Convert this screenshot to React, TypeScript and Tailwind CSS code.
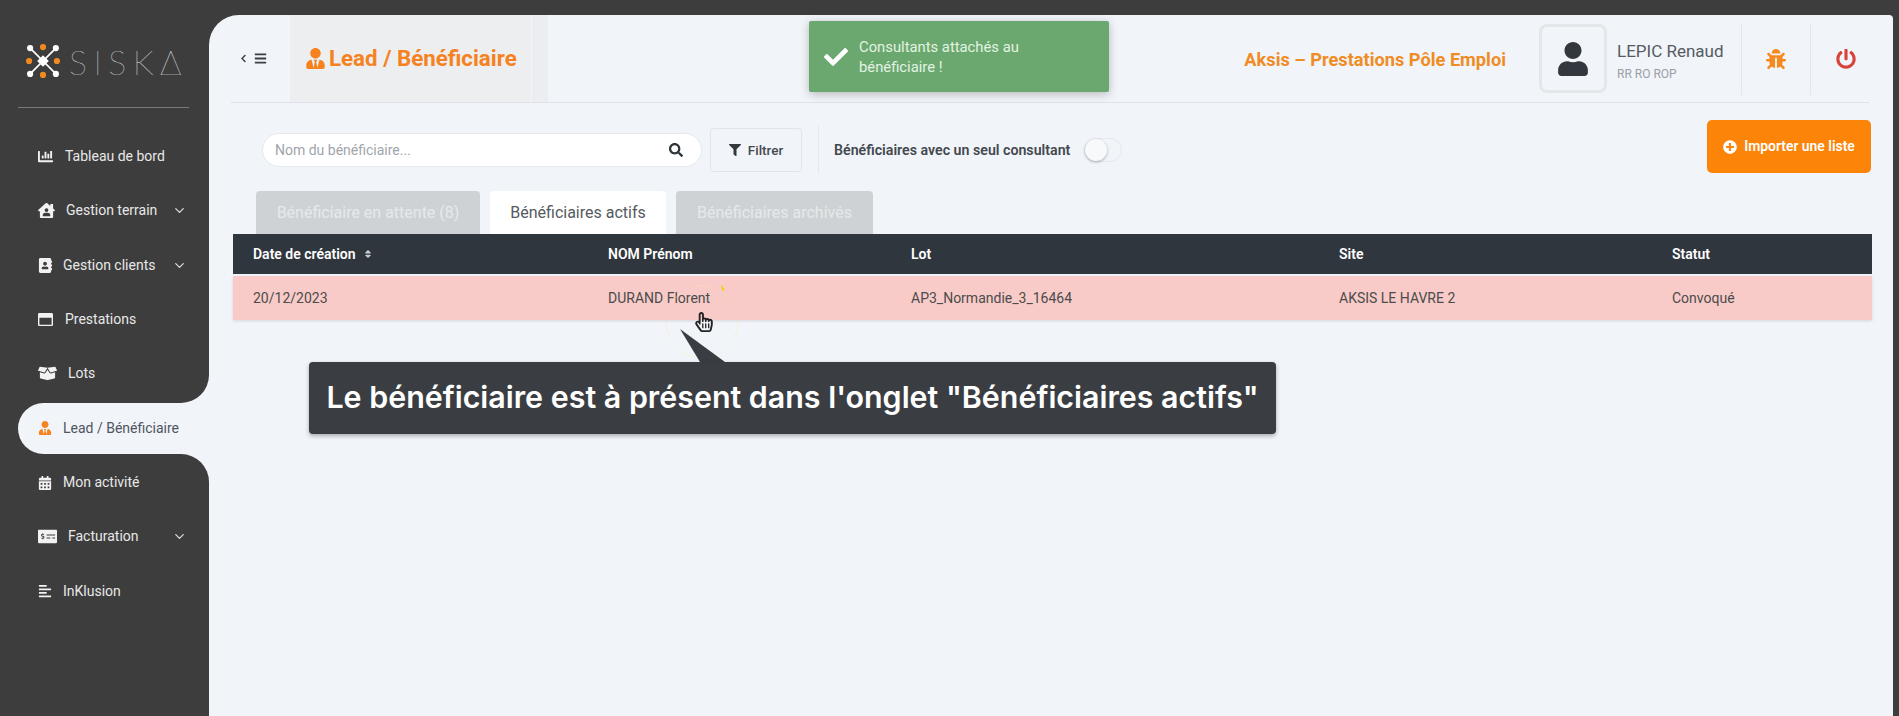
import React from "react";
import { ChevronDown } from "lucide-react";
import {
  FaAddressBook, FaAlignLeft, FaBars, FaBoxOpen, FaBug, FaCalendarAlt, FaChartBar, FaCheck, FaChevronLeft,
  FaFilter, FaHouseUser, FaMoneyCheckAlt, FaPlusCircle, FaPowerOff, FaRegHandPointer, FaRegWindowMaximize, FaSearch,
  FaSort, FaUser, FaUserTie,
} from "react-icons/fa";

const items = [
  { label: "Tableau de bord", icon: <FaChartBar size={15} />, w: "w-[27px]" },
  { label: "Gestion terrain", icon: <FaHouseUser size={17} />, w: "w-[28px]", chev: true },
  { label: "Gestion clients", icon: <FaAddressBook size={15} />, w: "w-[25px]", chev: true },
  { label: "Prestations", icon: <FaRegWindowMaximize size={15} />, w: "w-[27px]" },
  { label: "Lots", icon: <FaBoxOpen size={19} />, w: "w-[30px]", shape: "br" },
  { label: "Lead / Bénéficiaire", icon: <FaUserTie size={14} />, w: "w-[25px]", active: true },
  { label: "Mon activité", icon: <FaCalendarAlt size={14} />, w: "w-[25px]", shape: "tr" },
  { label: "Facturation", icon: <FaMoneyCheckAlt size={19} />, w: "w-[30px]", chev: true },
  { label: "InKlusion", icon: <FaAlignLeft size={14} />, w: "w-[25px]" },
];

function SideItem({ it }: { it: (typeof items)[number] }) {
  if (it.active) {
    return (
      <div className="h-[51px] ml-[18px] w-[191px] bg-[#f1f4f9] rounded-l-full flex items-center pl-[20px] text-[#4f5560] text-[14px]">
        <span className={`${it.w} text-[#f5831f]`}>{it.icon}</span>
        {it.label}
      </div>
    );
  }
  const shape =
    it.shape === "br" ? "rounded-br-[28px] h-[56px] pb-[2px]" : it.shape === "tr" ? "rounded-tr-[28px] h-[56px] pt-[2px]" : "h-[54.3px]";
  const back = it.shape ? "bg-[linear-gradient(to_right,#3d3d3d_50%,#f1f4f9_50%)]" : "";
  return (
    <div className={back}>
      <div className={`bg-[#3d3d3d] ${shape} flex items-center pl-[38px] pr-[22px] text-[#e8e8e8] text-[14px]`}>
        <span className={`${it.w} text-[#f2f2f2]`}>{it.icon}</span>
        <span className="flex-1">{it.label}</span>
        {it.chev && <ChevronDown size={15} className="text-[#dddddd]" />}
      </div>
    </div>
  );
}

function Logo() {
  const nodes = [[4, 4], [29, 4], [4, 29], [29, 29]];
  const dots = [[16.5, 3], [3, 16.5], [30, 16.5], [16.5, 30]];
  return (
    <svg width="34" height="34" viewBox="0 0 33 33">
      <path d="M4 4L29 29M29 4L4 29" stroke="#ffffff" strokeWidth="1.6" />
      <rect x="12.5" y="12.5" width="8" height="8" fill="#ffffff" transform="rotate(45 16.5 16.5)" />
      {nodes.map(([x, y], i) => <circle key={i} cx={x} cy={y} r="3" fill="#ffffff" />)}
      {dots.map(([x, y], i) => <circle key={i} cx={x} cy={y} r="3" fill="#f28a20" />)}
    </svg>
  );
}

const cols = [
  { w: "w-[355px]", head: "Date de création", val: "20/12/2023", sort: true },
  { w: "w-[303px]", head: "NOM Prénom", val: "DURAND Florent" },
  { w: "w-[428px]", head: "Lot", val: "AP3_Normandie_3_16464" },
  { w: "w-[333px]", head: "Site", val: "AKSIS LE HAVRE 2" },
  { w: "flex-1", head: "Statut", val: "Convoqué" },
];

export default function App() {
  return (
    <div className="relative w-[1899px] h-[716px] bg-[#3d3d3d] flex overflow-hidden font-['Roboto',sans-serif]">
      <aside className="w-[209px] shrink-0 flex flex-col">
        <div className="h-[108px] mx-[18px] w-[171px] border-b border-[#777a7c] flex items-start pl-[8px] pt-[44px] gap-[9px]">
          <Logo />
          <span className="font-['Lato',sans-serif] font-thin text-[34px] leading-[36px] tracking-[6.5px] text-[#f4f4f4] whitespace-nowrap">SISKΔ</span>
        </div>
        <nav className="mt-[21.5px] flex flex-col">
          {items.map((it) => <SideItem key={it.label} it={it} />)}
        </nav>
      </aside>

      <main className="w-[1684px] mt-[15px] bg-[#f1f4f9] rounded-tl-[30px] rounded-tr-[4px] flex flex-col">
        <header className="h-[88px] ml-[22px] mr-[24px] border-b border-[#dfe3e7] flex items-center shrink-0">
          <div className="w-[60px] flex items-center gap-[6px] pl-[8px] text-[#3a3f45]">
            <FaChevronLeft size={9} />
            <FaBars size={13} />
          </div>
          <div className="h-full w-[241px] bg-[#eceef0] flex items-center pl-[15px] gap-[3px] text-[#f5821f] ml-[-1px]">
            <FaUserTie size={21} />
            <span className="text-[22.3px] font-bold whitespace-nowrap">Lead / Bénéficiaire</span>
          </div>
          <div className="h-full w-[16px] bg-[#ebedf0] ml-[1px]" />
          <div className="flex-1" />
          <span className="text-[#f08c24] text-[18.2px] font-bold whitespace-nowrap pt-[2px]">Aksis – Prestations Pôle Emploi</span>
          <div className="ml-[33px] w-[68px] h-[69px] rounded-[8px] border-[3px] border-[#e4e7ea] flex items-center justify-center text-[#33383f]">
            <FaUser size={34} />
          </div>
          <div className="w-[134px] pl-[10px] pt-[6px]">
            <div className="text-[17px] leading-[20px] text-[#565b62] whitespace-nowrap">LEPIC Renaud</div>
            <div className="text-[12px] leading-[16px] mt-[5px] text-[#9aa0a6]">RR RO ROP</div>
          </div>
          <div className="h-[72px] w-[69px] border-l border-[#e3e6ea] flex items-center justify-center text-[#f58a1f]">
            <FaBug size={20} />
          </div>
          <div className="h-[72px] w-[59px] border-l border-[#e3e6ea] flex items-center pl-[25px] text-[#d9423a]">
            <FaPowerOff size={20} />
          </div>
        </header>

        <div className="h-[88px] pl-[53px] pr-[22px] flex items-start shrink-0">
          <div className="mt-[30px] w-[440px] h-[34px] bg-white rounded-full border border-[#e5e8ec] flex items-center pl-[12px] pr-[18px] text-[14px] text-[#a0a5ab]">
            <span className="flex-1">Nom du bénéficiaire...</span>
            <FaSearch size={14} className="text-[#2e3338]" />
          </div>
          <div className="mt-[25px] ml-[8px] w-[92px] h-[44px] rounded-[4px] border border-[#e1e4e8] flex items-center justify-center gap-[7px] text-[13.5px] font-medium text-[#454a50]">
            <FaFilter size={12} className="text-[#33383e]" />
            Filtrer
          </div>
          <div className="mt-[23px] ml-[16px] h-[48px] w-px bg-[#e5e8ec]" />
          <span className="mt-[37px] ml-[15px] text-[14.2px] font-semibold text-[#43484e] whitespace-nowrap">Bénéficiaires avec un seul consultant</span>
          <div className="mt-[35px] ml-[14px] w-[38px] h-[24px] rounded-full border border-[#e5e8ec] flex items-center">
            <div className="w-[22px] h-[22px] rounded-full bg-[#f8f9fb] shadow-[0_1px_3px_rgba(0,0,0,0.3)]" />
          </div>
          <div className="flex-1" />
          <div className="mt-[17px] w-[164px] h-[53px] rounded-[5px] bg-[#fb8409] flex items-center justify-center gap-[7px] text-white text-[13.9px] font-semibold">
            <FaPlusCircle size={14} />
            Importer une liste
          </div>
        </div>

        <div className="ml-[24px] flex items-end gap-[10px] pl-[23px] h-[43px] shrink-0">
          <div className="w-[224px] h-[43px] rounded-t-[4px] bg-[#ced2d5] text-[#e6e9eb] text-[16px] flex items-center justify-center">Bénéficiaire en attente (8)</div>
          <div className="w-[176px] h-[43px] rounded-t-[4px] bg-white text-[#555a60] text-[16px] flex items-center justify-center">Bénéficiaires actifs</div>
          <div className="w-[197px] h-[43px] rounded-t-[4px] bg-[#ced2d5] text-[#e6e9eb] text-[16px] flex items-center justify-center">Bénéficiaires archivés</div>
        </div>

        <div className="ml-[24px] w-[1639px]">
          <div className="h-[40px] bg-[#30363e] flex items-center pl-[20px] text-white text-[14px] font-semibold">
            {cols.map((c) => (
              <div key={c.head} className={`${c.w} flex items-center gap-[7px]`}>
                {c.head}
                {c.sort && <FaSort size={10} className="text-[#c8ccd0]" />}
              </div>
            ))}
          </div>
          <div className="mt-[2px] h-[44px] bg-[#f9cbc8] flex items-center pl-[20px] text-[#4b4b4b] text-[14px] shadow-[0_1px_3px_rgba(0,0,0,0.12)]">
            {cols.map((c) => <div key={c.head} className={c.w}>{c.val}</div>)}
          </div>
        </div>
      </main>

      <div className="absolute left-[809px] top-[21px] w-[300px] h-[71px] rounded-[2px] bg-[#6aa86f] shadow-[0_2px_10px_rgba(0,0,0,0.25)] flex items-center pl-[15px] text-[#e3f3e2] text-[14.8px] leading-[20px]">
        <FaCheck size={24} className="text-white shrink-0 mr-[11px]" />
        <span className="w-[210px]">Consultants attachés au bénéficiaire !</span>
      </div>

      <div className="absolute left-[660px] top-[280px] w-[90px] h-[90px]">
        <svg width="90" height="90" viewBox="0 0 90 90" className="absolute left-0 top-0">
          <circle cx="42" cy="42" r="36" fill="none" stroke="#f8e9a0" strokeWidth="1" strokeDasharray="18 14" opacity="0.35" />
          <path d="M61 4l4 6-3 1z" fill="#f5cf20" />
          <path d="M20 49 L40 82 L65 82 Z" fill="#3a3e42" />
        </svg>
        <FaRegHandPointer size={20} className="absolute left-[34px] top-[32px] text-[#222222]" />
      </div>

      <div className="absolute left-[309px] top-[362px] w-[967px] h-[72px] rounded-[4px] bg-[#3a3e42] shadow-[0_2px_4px_rgba(0,0,0,0.3)] flex items-center justify-center text-white text-[30.4px] font-semibold font-['Inter',sans-serif] whitespace-nowrap">
        Le bénéficiaire est à présent dans l'onglet "Bénéficiaires actifs"
      </div>
    </div>
  );
}
